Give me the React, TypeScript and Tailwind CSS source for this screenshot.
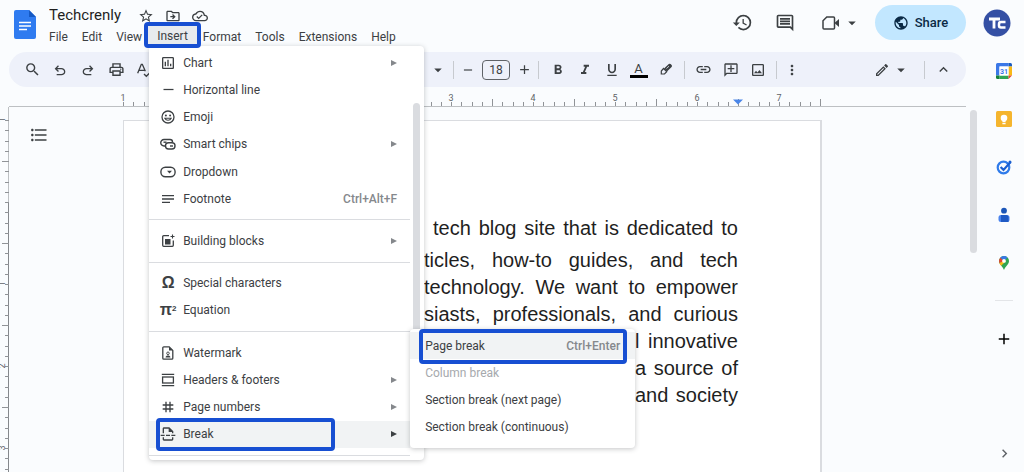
import { useState } from 'react';
import type { ReactNode } from 'react';
import {
  MdAdd,
  MdArrowDropDown,
  MdChevronRight,
  MdFormatBold,
  MdFormatItalic,
  MdFormatListBulleted,
  MdFormatUnderlined,
  MdHistory,
  MdHorizontalRule,
  MdInsertLink,
  MdKeyboardArrowUp,
  MdMoreVert,
  MdNotes,
  MdOutlineAddComment,
  MdOutlineCloudDone,
  MdOutlineDriveFileMove,
  MdOutlineEdit,
  MdOutlineImage,
  MdOutlineInsertComment,
  MdOutlineInsertPageBreak,
  MdOutlinePoll,
  MdOutlinePrint,
  MdPublic,
  MdRemove,
  MdSearch,
  MdStarBorder,
  MdTag,
} from 'react-icons/md';

type MenuEntry = {
  label: string;
  icon: ReactNode;
  shortcut?: string;
  submenu?: boolean;
};

/* ---------- Icons ---------- */

function DocsLogo() {
  return (
    <svg viewBox="0 0 22 29" className="h-[29px] w-[22px]" aria-hidden="true">
      <path d="M2 0h13l7 7v20a2 2 0 0 1-2 2H2a2 2 0 0 1-2-2V2a2 2 0 0 1 2-2z" fill="#2f7bf0" />
      <path d="M15 0l7 7h-7z" fill="#1559c4" />
      <path d="M5 12.5h12M5 16h12M5 19.5h8" stroke="#fff" strokeWidth="1.5" />
    </svg>
  );
}

function UndoIcon({ flip = false }: { flip?: boolean }) {
  return (
    <svg
      viewBox="0 0 24 24"
      className={flip ? 'size-4 -scale-x-100' : 'size-4'}
      fill="currentColor"
      aria-hidden="true">
      <path d="M7 20v-2h7.1q1.57 0 2.73-1T18 14.5 16.83 12t-2.73-1H7.8l2.6 2.6L9 15l-5-5 5-5 1.4 1.4L7.8 9h6.3q2.43 0 4.16 1.57T20 14.5t-1.74 3.93T14.1 20z" />
    </svg>
  );
}

function SpellIcon() {
  return (
    <svg viewBox="0 0 24 24" className="size-4" fill="none" stroke="currentColor" strokeWidth="2" aria-hidden="true">
      <path d="M2.5 17L8 3.5h1.5L14 14M4.500 12.5h8.5M12 18l3.5 3.5L22 15" />
    </svg>
  );
}

function HighlighterIcon() {
  return (
    <svg viewBox="0 0 16 16" className="size-4" aria-hidden="true">
      <path d="M5.500 6.500l3.200 3.200-2.200 2.300H3.300v-3z" fill="none" stroke="currentColor" strokeWidth="1.2" />
      <path d="M6 6.500l4.800-4.400a1.300 1.300 0 0 1 1.800 0l1 1a1.300 1.300 0 0 1 0 1.800L9 9.500z" fill="currentColor" />
      <path d="M8.500 6.500l2.500-2.300" stroke="#eef1fa" strokeWidth=".8" />
    </svg>
  );
}

function VideoIcon() {
  return (
    <svg viewBox="0 0 18 14" className="h-3.5 w-[18px]" aria-hidden="true">
      <path
        d="M4.800 1h6.700a1 1 0 0 1 1 1v10a1 1 0 0 1-1 1H2a1 1 0 0 1-1-1V4.800z"
        fill="none"
        stroke="currentColor"
        strokeWidth="1.5"
      />
      <path d="M13 6.500l4-3.500v8l-4-3.500z" fill="currentColor" />
    </svg>
  );
}

function SmartChipsIcon() {
  return (
    <svg viewBox="0 0 16 14" className="h-3.5 w-4" fill="none" stroke="currentColor" strokeWidth="1.4" aria-hidden="true">
      <path d="M5 9H4a3.200 3.200 0 0 1 0-6.500h6a2.500 2.500 0 0 1 2.500 2.500" />
      <path d="M3.5 5.200h3" />
      <rect x="5.500" y="5.800" width="9.500" height="6.200" rx="3" />
      <path d="M10 9h3" />
    </svg>
  );
}

function DropdownIcon() {
  return (
    <svg viewBox="0 0 16 12" className="h-3 w-4" aria-hidden="true">
      <rect x=".9" y="1.2" width="14.2" height="9.6" rx="4.500" fill="none" stroke="currentColor" strokeWidth="1.4" />
      <path d="M7 4.800h5L9.500 7.400z" fill="currentColor" />
    </svg>
  );
}

function BuildingBlocksIcon() {
  return (
    <svg viewBox="0 0 14 14" className="size-3.5" aria-hidden="true">
      <path d="M8 1.700H2.700a1 1 0 0 0-1 1v8.600a1 1 0 0 0 1 1h8.600a1 1 0 0 0 1-1V6.500" fill="none" stroke="currentColor" strokeWidth="1.3" />
      <rect x="4" y="5" width="5.500" height="5.500" fill="currentColor" />
      <path d="M11.500.5v4M9.500 2.500h4" stroke="currentColor" strokeWidth="1.1" />
    </svg>
  );
}

function EmojiIcon() {
  return (
    <svg viewBox="0 0 14 14" className="size-3.5" aria-hidden="true">
      <circle cx="7" cy="7" r="6" fill="none" stroke="currentColor" strokeWidth="1.3" />
      <circle cx="4.900" cy="5.400" r="1" fill="currentColor" />
      <circle cx="9.100" cy="5.400" r="1" fill="currentColor" />
      <path d="M3.800 8.200c1.300 2.700 5.100 2.700 6.400 0z" fill="none" stroke="currentColor" strokeWidth="1.1" />
    </svg>
  );
}

function WatermarkIcon() {
  return (
    <svg viewBox="0 0 12 14" className="h-3.5 w-3" aria-hidden="true">
      <path d="M1.800.8h5.400l3.600 3.600v7.800a1 1 0 0 1-1 1h-8a1 1 0 0 1-1-1V1.800a1 1 0 0 1 1-1z" fill="none" stroke="currentColor" strokeWidth="1.3" />
      <path d="M7 .8v3.800h4z" fill="currentColor" />
      <circle cx="6" cy="7.300" r="1.300" fill="none" stroke="currentColor" strokeWidth=".9" />
      <path d="M3.600 11.400c0-2.600 4.800-2.600 4.800 0z" fill="currentColor" />
    </svg>
  );
}

function HeadersIcon() {
  return (
    <svg viewBox="0 0 14 14" className="size-3.5" fill="none" stroke="currentColor" strokeWidth="1.3" aria-hidden="true">
      <path d="M.8 1.300h12.400M.8 12.700h12.400" />
      <rect x="1.600" y="4" width="10.800" height="6" />
    </svg>
  );
}

function CalendarIcon() {
  return (
    <svg viewBox="0 0 16 16" className="size-4" aria-hidden="true">
      <path d="M1.500 0h11v3.500H3.500v9H0v-11A1.500 1.500 0 0 1 1.500 0z" fill="#3b78e7" />
      <path d="M12.500 0h2A1.500 1.500 0 0 1 16 1.500v2h-3.500z" fill="#1b5cc0" />
      <path d="M12.500 3.500H16v9h-3.500z" fill="#f9b916" />
      <path d="M3.500 12.500h9V16h-9z" fill="#2fa553" />
      <path d="M0 12.500h3.500V16h-2A1.500 1.500 0 0 1 0 14.500z" fill="#16803a" />
      <path d="M12.500 12.500H16L12.500 16z" fill="#e5432f" />
      <path d="M3.500 3.500h9v9h-9z" fill="#fff" />
      <text x="8" y="10.500" textAnchor="middle" fontSize="7" fontWeight="700" fontFamily="Roboto, sans-serif" fill="#3b78e7">
        31
      </text>
    </svg>
  );
}

function KeepIcon() {
  return (
    <svg viewBox="0 0 16 16" className="size-4" aria-hidden="true">
      <rect width="16" height="16" rx="1.500" fill="#f5b52e" />
      <circle cx="8" cy="7" r="3.300" fill="#fff" />
      <path d="M6.400 9.500h3.200v1.700H6.400zM6.400 12h3.200v1.200H6.400z" fill="#fff" />
    </svg>
  );
}

function TasksIcon() {
  return (
    <svg viewBox="0 0 16 16" className="size-4" fill="none" aria-hidden="true">
      <circle cx="7.500" cy="8.500" r="5.800" stroke="#2f7bea" strokeWidth="2.200" />
      <path d="M4.600 8l2.900 2.900L14.600 3" stroke="#1b5fd0" strokeWidth="2.200" />
      <circle cx="14" cy="3" r="1.500" fill="#1b5fd0" />
    </svg>
  );
}

function ContactsIcon() {
  return (
    <svg viewBox="0 0 12 16" className="h-4 w-3" aria-hidden="true">
      <circle cx="6" cy="3.700" r="2.900" fill="#1b56b8" />
      <rect x=".5" y="8" width="11" height="7" rx="2.500" fill="#4a83ee" />
      <path d="M3 8h5a2.500 2.500 0 0 1 2.500 2.500V15H3z" fill="#1f5ac4" />
    </svg>
  );
}

function MapsIcon() {
  return (
    <svg viewBox="0 0 12 16" className="h-4 w-3" aria-hidden="true">
      <path d="M6 1a5 5 0 0 0-5 5c0 3.500 3.300 4.800 5 9 1.700-4.200 5-5.500 5-9a5 5 0 0 0-5-5z" fill="#2fa553" />
      <path d="M6 6L2.200 2.700A5 5 0 0 1 9.500 2.400z" fill="#3b78e7" />
      <path d="M6 6L2.200 2.700A5 5 0 0 0 1.300 8z" fill="#e5432f" />
      <path d="M6 6L1.300 8q.7 1.500 1.900 2.700L8 6z" fill="#f9b916" />
      <circle cx="6" cy="5.900" r="1.900" fill="#fff" />
    </svg>
  );
}

function Logo() {
  return (
    <svg viewBox="0 0 28 28" className="size-7" aria-hidden="true">
      <circle cx="14" cy="14" r="13.500" fill="#3550a4" />
      <path d="M6 10h11M11 10v9.500" stroke="#fff" strokeWidth="2.800" fill="none" />
      <path d="M22.500 13h-4.500a2 2 0 0 0-2 2v1.500a2 2 0 0 0 2 2h4.500" stroke="#fff" strokeWidth="2.500" fill="none" />
    </svg>
  );
}

/* ---------- Rulers ---------- */

const INCH = 82;

function tickLength(i: number) {
  return i % 8 === 4 ? 7 : 4;
}

function HorizontalRuler() {
  const ticks = Array.from({ length: 69 }, (_, i) => i);
  return (
    <svg className="ml-[9px] mr-[18px] h-5 w-[957px] shrink-0" aria-hidden="true">
      <path d="M0 19.5H957" stroke="#bdc0c3" />
      {ticks.map((i) => {
        const x = Math.round(114 + (i * INCH) / 8) + 0.5;
        return <path key={i} d={`M${x} 19v-${i === 68 ? 7 : tickLength(i)}`} stroke="#909397" />;
      })}
      {[1, 0, 1, 2, 3, 4, 5, 6, 7].map((n, i) =>
        n === 0 ? null : (
          <text key={i} x={114 + i * INCH} y="14" textAnchor="middle" className="fill-[#5f6368] font-[Roboto] text-[9px]">
            {n}
          </text>
        )
      )}
      <path d="M724 12.500h10l-5 5z" fill="#4a86e8" />
    </svg>
  );
}

function VerticalRuler() {
  const ticks = Array.from({ length: 50 }, (_, i) => i);
  return (
    <svg className="h-full w-2.5 shrink-0" aria-hidden="true">
      <path d="M8.500 0V95" stroke="#bdc0c3" />
      <path d="M8.500 95V1000" stroke="#85888c" />
      {ticks.map((i) => {
        const y = Math.round(13 + (i * INCH) / 8) + 0.5;
        return <path key={i} d={`M9 ${y}h-${tickLength(i)}`} stroke="#909397" />;
      })}
      {[1, 0, 1, 2, 3].map((n, i) =>
        n === 0 ? null : (
          <text
            key={i}
            transform={`translate(5 ${13 + i * INCH}) rotate(-90)`}
            textAnchor="middle"
            className="fill-[#5f6368] font-[Roboto] text-[9px]">
            {n}
          </text>
        )
      )}
    </svg>
  );
}

/* ---------- Insert menu ---------- */

const insertGroups: MenuEntry[][] = [
  [
    { label: 'Chart', icon: <MdOutlinePoll size={16} />, submenu: true },
    { label: 'Horizontal line', icon: <MdHorizontalRule size={15} /> },
    { label: 'Emoji', icon: <EmojiIcon /> },
    { label: 'Smart chips', icon: <SmartChipsIcon />, submenu: true },
    { label: 'Dropdown', icon: <DropdownIcon /> },
    { label: 'Footnote', icon: <MdNotes size={16} />, shortcut: 'Ctrl+Alt+F' },
  ],
  [{ label: 'Building blocks', icon: <BuildingBlocksIcon />, submenu: true }],
  [
    { label: 'Special characters', icon: <span className="font-['Liberation_Sans',sans-serif] text-base font-bold">Ω</span> },
    {
      label: 'Equation',
      icon: (
        <span className="font-['Liberation_Sans',sans-serif] text-base font-bold">
          π<sup className="text-[8px]">2</sup>
        </span>
      ),
    },
  ],
  [
    { label: 'Watermark', icon: <WatermarkIcon /> },
    { label: 'Headers & footers', icon: <HeadersIcon />, submenu: true },
    { label: 'Page numbers', icon: <MdTag size={16} />, submenu: true },
    { label: 'Break', icon: <MdOutlineInsertPageBreak size={16} />, submenu: true },
  ],
];

const breakItems = [
  { label: 'Page break', shortcut: 'Ctrl+Enter' },
  { label: 'Column break', disabled: true },
  { label: 'Section break (next page)' },
  { label: 'Section break (continuous)' },
];

function BreakMenu() {
  return (
    <div
      role="menu"
      aria-label="Break"
      className="absolute bottom-0 left-full z-10 flex h-[119px] w-[225px] flex-col rounded-sm bg-white pb-[7px] pt-[3px] shadow-[0_1px_5px_rgba(60,64,67,0.3)]">
      {breakItems.map((item, i) => (
        <div key={item.label} className="relative flex flex-1">
          <button
            role="menuitem"
            disabled={item.disabled}
            className={`flex flex-1 items-center justify-between px-[15px] disabled:text-[#a6a9ad] ${
              i === 0 ? 'bg-[#f1f3f4]' : ''
            }`}>
            <span>{item.label}</span>
            {item.shortcut && <span className="font-medium text-[#85888c]">{item.shortcut}</span>}
          </button>
          {i === 0 && (
            <span className="pointer-events-none absolute -bottom-[5px] -top-[3px] left-[9px] right-2 rounded-sm border-4 border-[#174fd2]" />
          )}
        </div>
      ))}
    </div>
  );
}

function InsertMenu() {
  return (
    <div
      role="menu"
      aria-label="Insert"
      className="absolute left-[5px] top-5 z-10 flex h-[414px] w-[275px] rounded-sm bg-white text-[#3c4043] shadow-[0_1px_5px_rgba(60,64,67,0.3)]">
      <div className="flex w-[261px] flex-col pb-1 pt-[3px]">
        {insertGroups.map((group, g) => (
          <div key={g} className="contents">
            {g > 0 && <hr className="my-[7px] border-[#dadce0]" />}
            {group.map((item) => (
              <div key={item.label} className="relative flex flex-1">
                <button
                  role="menuitem"
                  className={`flex flex-1 items-center pl-2.5 pr-[13px] ${
                    item.label === 'Break' ? 'bg-[#f1f3f4]' : ''
                  }`}>
                  <span className="flex h-5 w-[18px] items-center justify-center">{item.icon}</span>
                  <span className="ml-1.5">{item.label}</span>
                  {item.shortcut && <span className="ml-auto font-medium text-[#85888c]">{item.shortcut}</span>}
                  {item.submenu && (
                    <svg
                      viewBox="0 0 6 6"
                      className={`ml-auto size-1.5 ${item.label === 'Break' ? 'text-[#3c4043]' : 'text-[#85888c]'}`}>
                      <path d="M0 0l6 3-6 3z" fill="currentColor" />
                    </svg>
                  )}
                </button>
                {item.label === 'Break' && (
                  <>
                    <span className="pointer-events-none absolute -inset-y-[3px] left-[7px] w-[179px] rounded-sm border-4 border-[#174fd2]" />
                    <BreakMenu />
                  </>
                )}
              </div>
            ))}
          </div>
        ))}
        <hr className="mt-[7px] border-[#dadce0]" />
      </div>
      {/* scroll thumb */}
      <div className="ml-[3px] mt-[57px] h-[300px] w-[7px] rounded-t-full bg-[#dadce0]" />
    </div>
  );
}

/* ---------- Header ---------- */

const menus = ['File', 'Edit', 'View', 'Insert', 'Format', 'Tools', 'Extensions', 'Help'];

function Header() {
  const [title, setTitle] = useState('Techcrenly');

  return (
    <header className="flex h-[52px] shrink-0 items-start pl-3.5 pr-[13px]">
      <a href="#" aria-label="Docs home" className="mt-2.5">
        <DocsLogo />
      </a>
      <div className="ml-[13px] mt-1.5">
        <div className="flex h-5 items-center gap-[9px]">
          <input
            aria-label="Document title"
            value={title}
            onChange={(e) => setTitle(e.target.value)}
            className="-mr-[9px] w-[88px] bg-transparent text-[15px] text-[#1f1f1f] outline-none"
          />
          <button aria-label="Star" className="flex w-[18px] justify-center">
            <MdStarBorder size={16} />
          </button>
          <button aria-label="Move" className="flex w-[18px] justify-center">
            <MdOutlineDriveFileMove size={16} />
          </button>
          <button aria-label="Saved to Drive" className="flex w-[18px] justify-center">
            <MdOutlineCloudDone size={16} />
          </button>
        </div>
        <nav className="flex h-[22px] gap-3.5">
          {menus.map((name) =>
            name === 'Insert' ? (
              <div key={name} className="relative -mx-3">
                <button className="relative z-20 -mt-1 h-[26px] rounded-sm border-4 border-[#174fd2] bg-[#e8ebee] px-[9px] pt-0.5">
                  {name}
                </button>
                <InsertMenu />
              </div>
            ) : (
              <button key={name}>{name}</button>
            )
          )}
        </nav>
      </div>
      <div className="ml-auto flex h-[45px] items-center">
        <button aria-label="Version history">
          <MdHistory size={21} />
        </button>
        <button aria-label="Comments" className="ml-[22px]">
          <MdOutlineInsertComment size={20} />
        </button>
        <button aria-label="Join a call" className="ml-[27px] flex items-center gap-[3px]">
          <VideoIcon />
          <MdArrowDropDown size={18} />
        </button>
        <button className="ml-3.5 flex h-[35px] w-[91px] items-center justify-center gap-1.5 rounded-full bg-[#c2e7ff] text-[13px] font-medium text-[#0b2a45]">
          <MdPublic size={16} />
          Share
        </button>
        <button aria-label="Account" className="ml-[17px]">
          <Logo />
        </button>
      </div>
    </header>
  );
}

/* ---------- Toolbar ---------- */

function ToolButton({ label, className = 'w-[27px]', children }: { label: string; className?: string; children: ReactNode }) {
  return (
    <button aria-label={label} className={`flex shrink-0 justify-center ${className}`}>
      {children}
    </button>
  );
}

function Divider() {
  return <span className="mx-[5px] h-[18px] w-px shrink-0 bg-[#c7cacf]" />;
}

function Toolbar() {
  const [fontSize, setFontSize] = useState('18');

  return (
    <div className="ml-[9px] mr-[18px] flex h-[35px] shrink-0 items-center rounded-full bg-[#eef1fa] px-[9px]">
      <ToolButton label="Search" className="w-7">
        <MdSearch size={17} />
      </ToolButton>
      <ToolButton label="Undo" className="w-7">
        <UndoIcon />
      </ToolButton>
      <ToolButton label="Redo" className="w-7">
        <UndoIcon flip />
      </ToolButton>
      <ToolButton label="Print" className="w-7">
        <MdOutlinePrint size={17} />
      </ToolButton>
      <ToolButton label="Spelling" className="w-7">
        <SpellIcon />
      </ToolButton>
      <ToolButton label="Font" className="ml-[270px] w-5">
        <MdArrowDropDown size={18} />
      </ToolButton>
      <Divider />
      <ToolButton label="Decrease font size" className="w-[18px]">
        <MdRemove size={14} />
      </ToolButton>
      <input
        aria-label="Font size"
        value={fontSize}
        onChange={(e) => setFontSize(e.target.value)}
        className="mx-[5px] h-5 w-7 rounded-sm border border-[#5f6368] bg-transparent text-center text-xs outline-none"
      />
      <ToolButton label="Increase font size" className="w-[18px]">
        <MdAdd size={15} />
      </ToolButton>
      <Divider />
      <ToolButton label="Bold">
        <MdFormatBold size={16} />
      </ToolButton>
      <ToolButton label="Italic">
        <MdFormatItalic size={16} />
      </ToolButton>
      <ToolButton label="Underline">
        <MdFormatUnderlined size={16} />
      </ToolButton>
      <ToolButton label="Text color">
        <span className="flex w-[18px] flex-col items-center border-b-[3px] border-black text-[13px] leading-[13px]">A</span>
      </ToolButton>
      <ToolButton label="Highlight color">
        <HighlighterIcon />
      </ToolButton>
      <Divider />
      <ToolButton label="Insert link">
        <MdInsertLink size={17} />
      </ToolButton>
      <ToolButton label="Add comment">
        <MdOutlineAddComment size={16} className="-scale-x-100" />
      </ToolButton>
      <ToolButton label="Insert image">
        <MdOutlineImage size={16} />
      </ToolButton>
      <Divider />
      <ToolButton label="More" className="w-5">
        <MdMoreVert size={16} />
      </ToolButton>
      <ToolButton label="Editing mode" className="ml-auto mr-2 w-[38px]">
        <span className="flex items-center gap-0.5">
          <MdOutlineEdit size={16} />
          <MdArrowDropDown size={18} />
        </span>
      </ToolButton>
      <Divider />
      <ToolButton label="Hide menus">
        <MdKeyboardArrowUp size={17} />
      </ToolButton>
    </div>
  );
}

/* ---------- Document ---------- */

function Page() {
  return (
    <article className="w-[699px] shrink-0 border border-b-0 border-r-2 border-[#dadce0] bg-white pr-[82px] pt-[94px] font-['Liberation_Sans',sans-serif] text-xl leading-[27px] text-[#1f1f1f] [text-align-last:justify]">
      <div className="ml-auto w-[314px]">
        <p className="mb-[5px] ml-auto w-[305px]">tech blog site that is dedicated to</p>
        <p>ticles, how-to guides, and tech</p>
        <p>technology. We want to empower</p>
        <p>siasts, professionals, and curious</p>
        <p className="ml-auto w-[103px]">l innovative</p>
        <p className="ml-auto w-[103px]">a source of</p>
        <p className="ml-auto w-[103px]">and society</p>
      </div>
    </article>
  );
}

function SidePanel() {
  return (
    <aside className="flex w-10 shrink-0 flex-col items-center pt-[11px]">
      <div className="flex flex-col items-center gap-8">
        <button aria-label="Calendar">
          <CalendarIcon />
        </button>
        <button aria-label="Keep">
          <KeepIcon />
        </button>
        <button aria-label="Tasks">
          <TasksIcon />
        </button>
        <button aria-label="Contacts">
          <ContactsIcon />
        </button>
        <button aria-label="Maps">
          <MapsIcon />
        </button>
      </div>
      <hr className="mt-[29px] w-[18px] border-[#e3e5e8]" />
      <button aria-label="Get add-ons" className="mt-[29px] text-black">
        <MdAdd size={18} />
      </button>
      <button aria-label="Hide side panel" className="mb-2.5 mt-auto text-[#5f6368]">
        <MdChevronRight size={17} />
      </button>
    </aside>
  );
}

export default function App() {
  return (
    <div className="flex h-screen flex-col overflow-hidden bg-[#fafcfe] font-[Roboto,sans-serif] text-xs text-[#3c4043]">
      <Header />
      <div className="flex min-h-0 flex-1">
        <main className="flex min-w-0 flex-1 flex-col">
          <Toolbar />
          <HorizontalRuler />
          <div className="flex min-h-0 flex-1">
            <VerticalRuler />
            <div className="w-[113px] shrink-0 pl-[19px] pt-[18px]">
              <button aria-label="Show outline">
                <MdFormatListBulleted size={20} />
              </button>
            </div>
            <div className="flex pt-[13px]">
              <Page />
            </div>
            <div className="ml-auto mr-[7px] mt-[3px] h-[143px] w-[7px] rounded-full bg-[#dadce0]" />
          </div>
        </main>
        <SidePanel />
      </div>
    </div>
  );
}
